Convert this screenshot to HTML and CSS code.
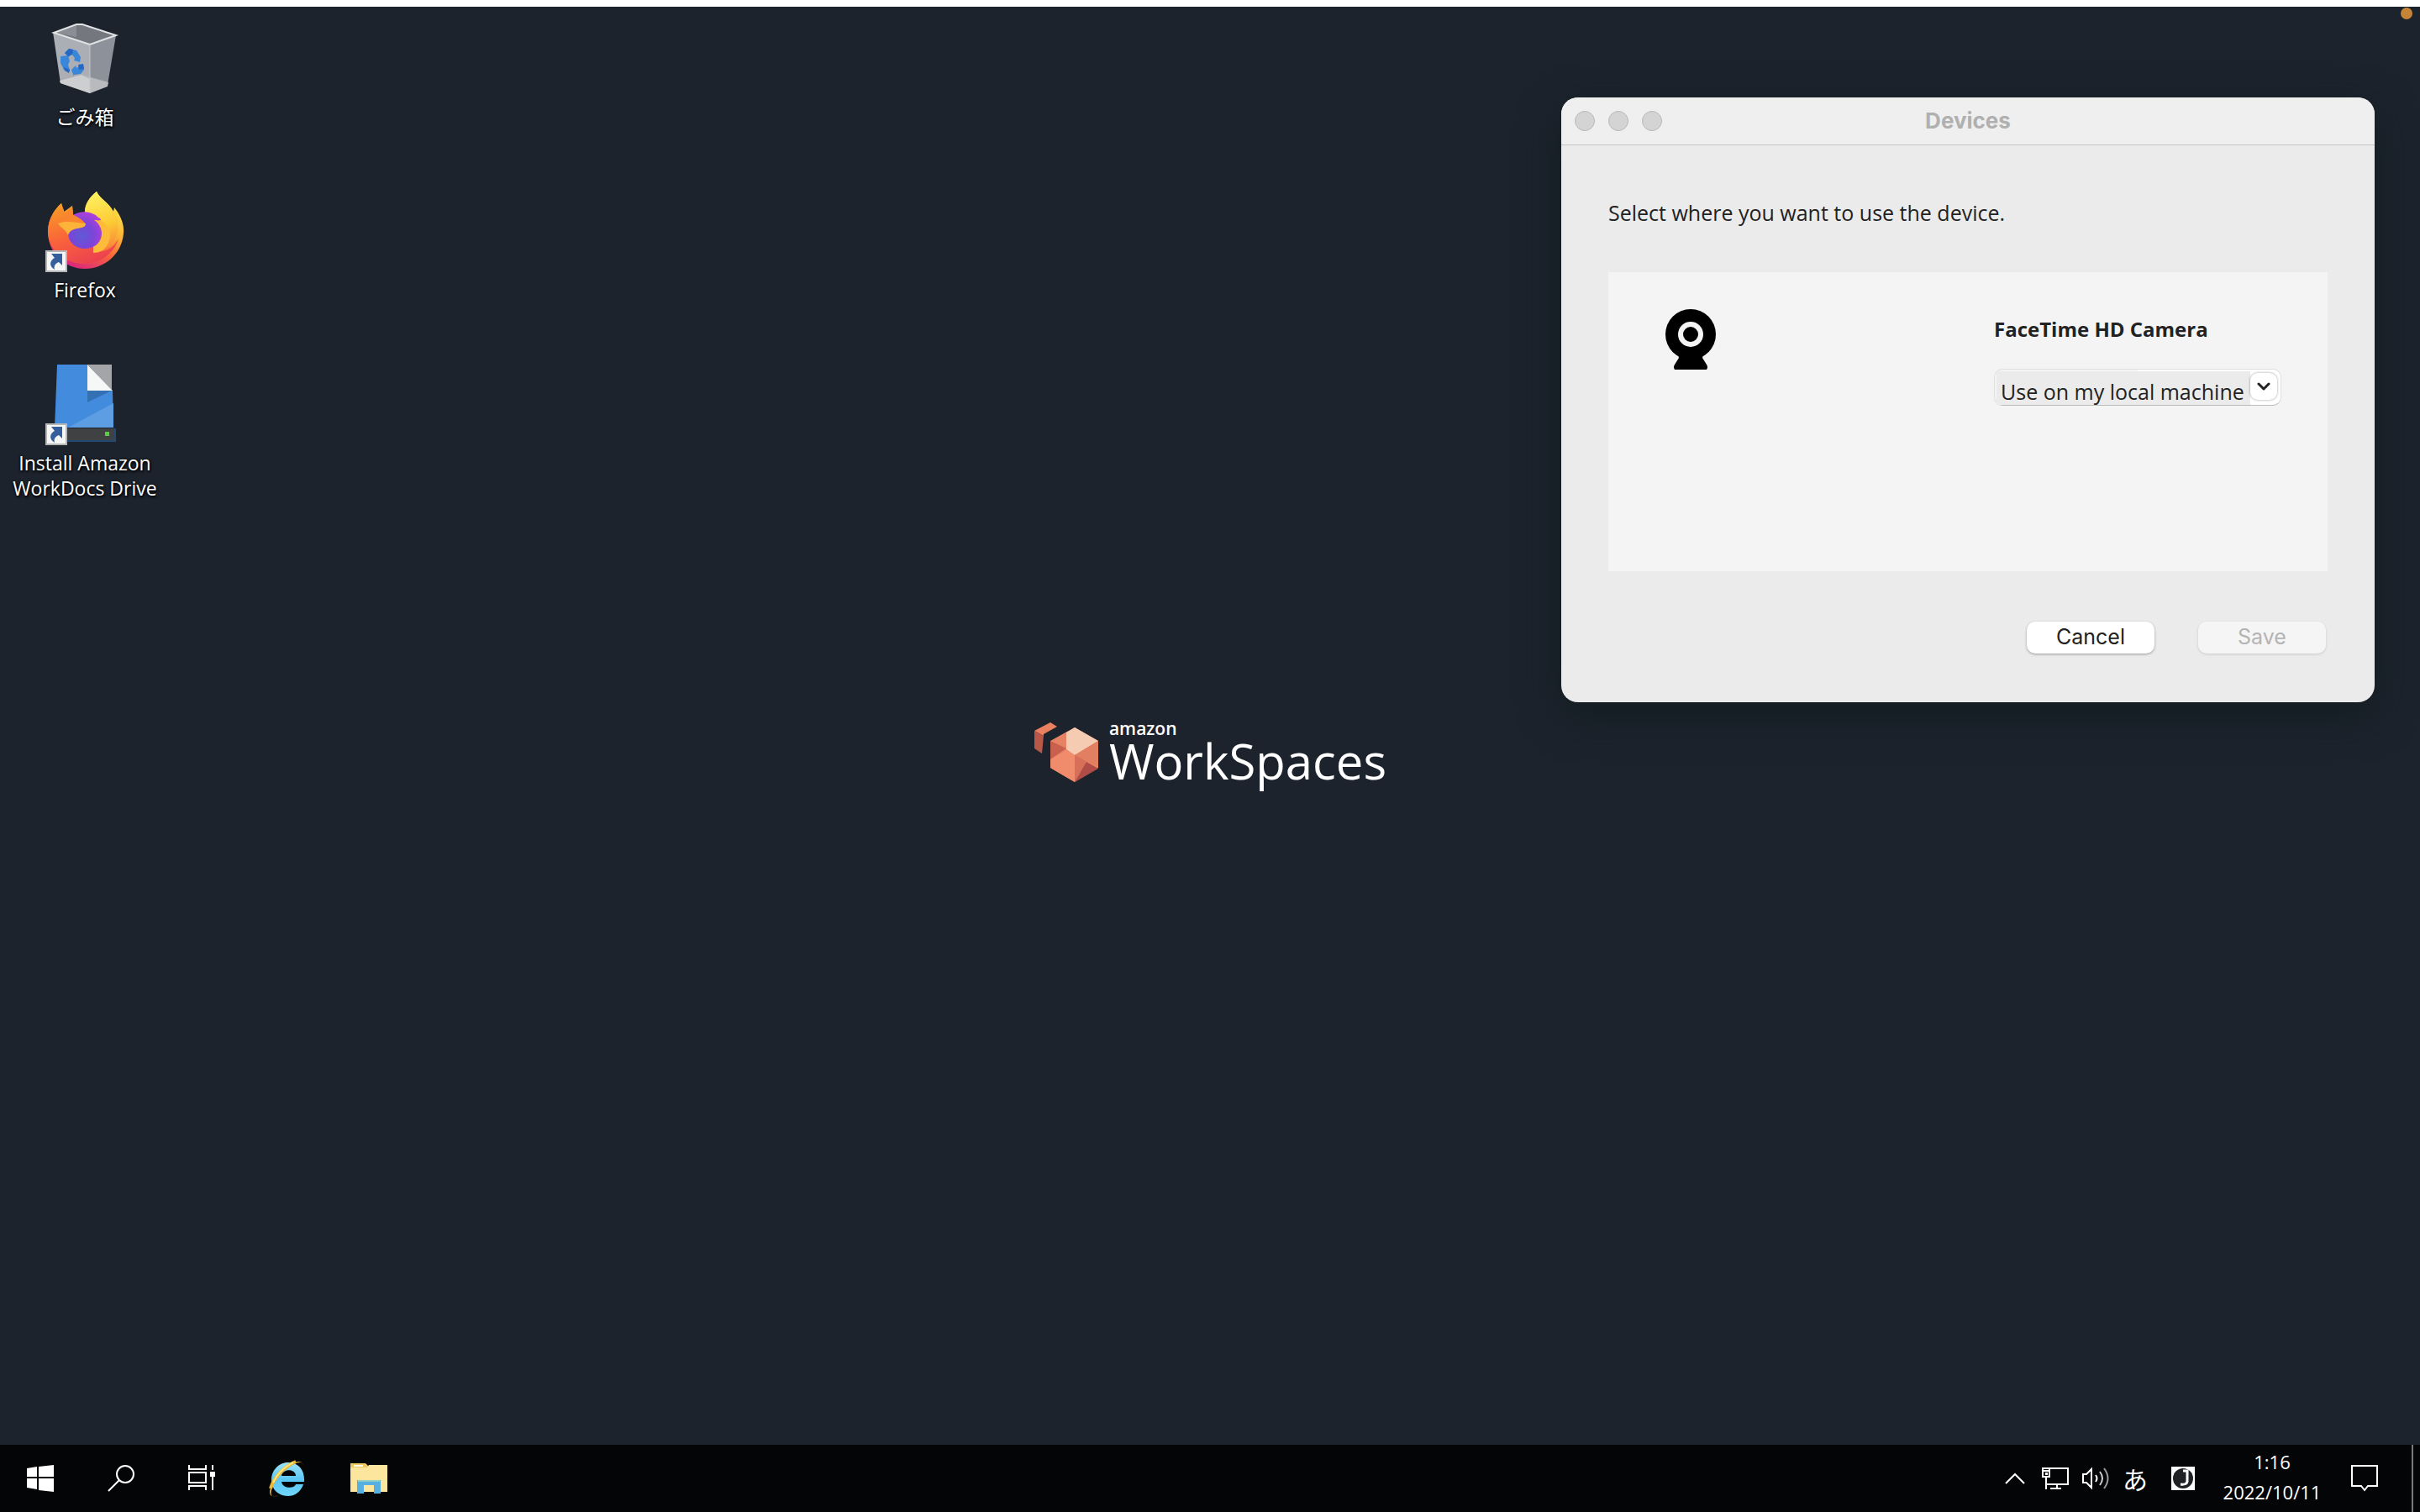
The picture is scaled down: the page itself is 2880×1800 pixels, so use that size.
FILE: index.html
```
<!DOCTYPE html>
<html lang="ja">
<head>
    <meta charset="UTF-8">
    <meta name="viewport" content="width=device-width, initial-scale=1.0">
    <title>Amazon WorkSpaces</title>
    <link rel="stylesheet" href="styles.css">
</head>
<body>
    <div class="screen">
        <main class="desktop">
            <span class="recording-dot"></span>

            <nav class="shortcuts">
                <a class="shortcut" href="#trash">
                    <svg class="shortcut-icon" width="96" height="96" viewBox="0 -2 96 96">
                        <path fill="#74777d" d="M11 19 38 9h8l39 13-31 11z"/>
                        <path fill="#8b8e94" d="M14 19 38 10v14z"/>
                        <path fill="#abaeb4" d="M10 18 54 33v58l-35-12z"/>
                        <path fill="#8d9199" d="M54 33 85 22l-10 59-21 10z"/>
                        <path fill="#cdced0" d="m18 76 26-7 10 5v17l-35-12z"/>
                        <path fill="#b8babe" d="m44 69 32 9-1 5-21 8V74z"/>
                        <path fill="none" stroke="#e1e2e4" stroke-width="2" d="M11 19 38 9h7l40 13-31 11z"/>
                        <path fill="none" stroke="#c4c6ca" d="M54 33v57"/>
                        <g fill="#3a86d8">
                            <path d="m24 43 5-5 9 2 5 8-1 6-7-2 1-3-4-5-3 4z"/>
                            <path d="m19 47 9-1 2 7-2 4 2 6-1 3-6-3-4-8z"/>
                            <path d="m32 63 5-5 1 3 8-5 1 7-4 5-8 1v2z"/>
                        </g>
                        <path fill="#2467c4" d="m24 43 5-5 5 1-1 6-5 2zM23 60l7 3-1 4-5-3zM40 57l6-1 1 6-6 1z"/>
                    </svg>
                    <span>ごみ箱</span>
                </a>
                <a class="shortcut" href="#firefox">
                    <svg class="shortcut-icon" width="96" height="96" viewBox="0 0 96 96">
                        <defs>
                            <linearGradient id="fox" x1=".8" y1=".1" x2=".35" y2="1">
                                <stop offset="0" stop-color="#fde94f"/>
                                <stop offset=".38" stop-color="#fbb034"/>
                                <stop offset=".65" stop-color="#f8633b"/>
                                <stop offset="1" stop-color="#d9257f"/>
                            </linearGradient>
                            <linearGradient id="foxBody" x1=".2" y1="0" x2=".6" y2="1">
                                <stop offset="0" stop-color="#f99b25"/>
                                <stop offset=".5" stop-color="#f9653a"/>
                                <stop offset="1" stop-color="#ec4051"/>
                            </linearGradient>
                            <linearGradient id="foxTail" x1=".3" y1="0" x2=".5" y2="1">
                                <stop offset="0" stop-color="#fff260"/>
                                <stop offset=".6" stop-color="#fcc934"/>
                                <stop offset="1" stop-color="#f9853b"/>
                            </linearGradient>
                            <radialGradient id="globe" cx=".4" cy=".65" r=".7">
                                <stop offset="0" stop-color="#5f5ad5"/>
                                <stop offset=".5" stop-color="#7a45d8"/>
                                <stop offset="1" stop-color="#b340dc"/>
                            </radialGradient>
                        </defs>
                        <path fill="url(#fox)" d="M48 30c-1-10 5-19 14-26 3 8 15 14 20 24l1-5c9 11 12 22 11 31-2 24-22 42-46 42S4 77 4 52c0-12 5-24 16-34l2 11 11-8 1 11z"/>
                        <path fill="url(#foxTail)" d="M48 31c0-11 4-19 14-27 4 9 15 13 20 24l2-3c5 12 5 32-5 43-5 5-12 8-18 8 10-10 8-32-6-39z"/>
                        <path fill="url(#foxBody)" d="M34 32 33 21l-9 8-4-11C10 27 4 39 4 51c0 22 18 38 42 39 18 0 36-10 42-30-6 12-17 17-26 15 9-8 9-22 5-31z"/>
                        <path fill="#fcbc3a" d="M58 34c17 5 24 20 17 33-4 7-10 10-17 10z"/>
                        <path fill="url(#globe)" d="M34 32c9-6 23-5 30 3 2 1 3 1 3 3-3 1-6 0-8 0 6 4 9 10 9 16 0 11-9 18-20 18S29 65 28 55c3-7 10-8 15-12-2-6-6-9-9-11z"/>
                        <path fill="#f9852f" d="M33 31c8 4 14 8 16 12-10-1-22-3-33 0z"/>
                        <path fill="#fcb339" d="M16 42c10-4 21-1 33 0 0 5-5 5-10 6-6 1-9 3-11 8-2-6-8-8-12-14z"/>
                    </svg>
                    <svg class="shortcut-arrow" width="26" height="26" viewBox="0 0 26 26">
                        <path fill="#f6f6f6" stroke="#b5b6b8" stroke-width="2" d="M1 1h24v24H1z"/>
                        <path fill="#345f9c" d="M7 4h13v14l-4-4c-5 2-6 5-5 9-7-4-6-11 0-14z"/>
                    </svg>
                    <span>Firefox</span>
                </a>
                <a class="shortcut" href="#workdocs">
                    <svg class="shortcut-icon" width="96" height="96" viewBox="0 0 96 96">
                        <path fill="#234a73" d="M13 80h72v16H13z"/>
                        <path fill="#438bdd" d="M15 4h36v31h30l1 44H12z"/>
                        <path fill="#5d9ee3" d="m28 79 54-29v29z"/>
                        <path fill="#3471b4" d="M51 35h29L51 49z"/>
                        <path fill="#a3a5a8" d="M51 4h29v30z"/>
                        <path fill="#f6f7f7" d="m51 4 30 31H51z"/>
                        <path fill="#404142" d="M13 80h70v14H13z"/>
                        <path fill="#53cf40" d="M72 84h5v5h-5z"/>
                    </svg>
                    <svg class="shortcut-arrow" width="26" height="26" viewBox="0 0 26 26">
                        <path fill="#f6f6f6" stroke="#b5b6b8" stroke-width="2" d="M1 1h24v24H1z"/>
                        <path fill="#345f9c" d="M7 4h13v14l-4-4c-5 2-6 5-5 9-7-4-6-11 0-14z"/>
                    </svg>
                    <span>Install Amazon WorkDocs Drive</span>
                </a>
            </nav>

            <div class="wallpaper">
                <svg width="80" height="72" viewBox="0 0 80 72">
                    <path fill="#e9805f" d="M1 10 20 0l8 5-16 9v2z"/>
                    <path fill="#b95748" d="m1 10 11 6-2 21-9-6z"/>
                    <path fill="#e58364" d="m49 6-29 16v32l29 17 28-17V22z"/>
                    <path fill="#c8604d" d="m20 22 19 9-19 13z"/>
                    <path fill="#f5cbb2" d="m49 6 28 16-28 17-10-7V12z"/>
                    <path fill="#ee8669" d="m49 39 28-17v25z"/>
                    <path fill="#f08b6c" d="m20 44 19-11 10 6v32L20 54z"/>
                    <path fill="#af4c47" d="m49 39 28 16-28 16z"/>
                    <path fill="#d87059" d="M49 39v32l14-24z"/>
                    <path fill="#e27f63" d="m49 39 28-17v30z"/>
                </svg>
                <div class="wallpaper-text">
                    <span class="brand">amazon</span>
                    <span class="product">WorkSpaces</span>
                </div>
            </div>

            <section class="window" aria-labelledby="windowTitle">
                <header class="titlebar">
                    <div class="lights">
                        <button class="light" aria-label="Close"></button>
                        <button class="light" aria-label="Minimize"></button>
                        <button class="light" aria-label="Zoom"></button>
                    </div>
                    <h1 id="windowTitle">Devices</h1>
                </header>
                <form class="window-body">
                    <p>Select where you want to use the device.</p>
                    <div class="device">
                        <svg width="60" height="72" viewBox="0 0 60 72">
                            <ellipse cx="30" cy="30" rx="30" ry="30"/>
                            <path d="M15 54h30l-1 4 5 8q2 3 0 6H11q-2-3 0-6l5-8z"/>
                            <circle cx="30" cy="30" r="12" fill="none" stroke="#f4f4f4" stroke-width="6"/>
                        </svg>
                        <div class="device-options">
                            <label for="location">FaceTime HD Camera</label>
                            <div class="combo">
                                <select id="location" name="location">
                                    <option selected>Use on my local machine</option>
                                    <option>Use on WorkSpaces</option>
                                </select>
                                <span class="combo-arrow">
                                    <svg width="16" height="12" viewBox="0 0 16 12"><path fill="none" stroke="#222" stroke-width="3" stroke-linecap="round" stroke-linejoin="round" d="m2 3 6 6 6-6"/></svg>
                                </span>
                            </div>
                        </div>
                    </div>
                    <div class="actions">
                        <button type="button">Cancel</button>
                        <button type="submit" disabled>Save</button>
                    </div>
                </form>
            </section>
        </main>

        <footer class="taskbar">
            <div class="apps">
                <button aria-label="Start">
                    <svg width="32" height="32" viewBox="0 0 32 32"><path fill="#fff" d="M0 4 12 2v12H0zM14 2l18-2v14H14zM0 16h12v13L0 27zM14 16h18v16l-18-2z"/></svg>
                </button>
                <button aria-label="Search">
                    <svg width="32" height="32" viewBox="0 0 32 32"><g fill="none" stroke="#fff" stroke-width="2"><circle cx="21" cy="11" r="10"/><path d="M14 18 1 31"/></g></svg>
                </button>
                <button aria-label="Task view">
                    <svg width="32" height="32" viewBox="0 0 32 32"><path fill="none" stroke="#fff" stroke-width="2" d="M1 0v5h20V0M1 9h20v12H1zM1 30v-5h20v5M29 0v6M29 14v16"/><path fill="#fff" d="M26 8h6v6h-6z"/></svg>
                </button>
                <button aria-label="Internet Explorer">
                    <svg width="46" height="46" viewBox="0 0 46 46">
                        <defs>
                            <linearGradient id="ie" x1="0" y1="0" x2="0" y2="1"><stop offset="0" stop-color="#9be4fa"/><stop offset=".5" stop-color="#5bc7f4"/><stop offset="1" stop-color="#70d6fa"/></linearGradient>
                        </defs>
                        <path fill="url(#ie)" fill-rule="evenodd" d="M25 4c12 0 20 9 19 23H17c1 8 15 9 17 3h9c-3 9-10 14-18 14C13 44 5 36 5 25S13 4 25 4zM17 20h17c0-9-16-9-17 0z"/>
                        <path fill="#e6b32b" d="M42 10c2-9-6-9-16-2C14 16 3 31 3 40c1 6 6 5 10 3-9 5-11-2-5-13C15 17 30 5 38 4c4-1 5 2 4 6z"/>
                        <path fill="none" stroke="#e9b93a" stroke-width="4" d="M4 35C8 21 21 8 34 3"/>
                        <path fill="none" stroke="#fbe680" stroke-width="2" d="M7 28C12 17 21 9 31 4"/>
                    </svg>
                </button>
                <button aria-label="File Explorer">
                    <svg width="44" height="36" viewBox="0 0 44 36">
                        <path fill="#f0ca60" d="M0 0h18l3 3v4H0z"/>
                        <path fill="#fce59c" d="M0 5h20l2-3h22v32H0z"/>
                        <path fill="#fffdf0" d="M4 2h11v2H4z"/>
                        <path fill="#58b0e2" d="M8 20h28v16h-8V26H16v10H8z"/>
                        <path fill="#fce59c" d="M16 28h12v6H16z"/>
                        <path fill="#8fd0c2" d="M9 20h26v2H9z"/>
                    </svg>
                </button>
            </div>
            <div class="tray">
                <button aria-label="Show hidden icons">
                    <svg width="24" height="16" viewBox="0 0 24 16"><path fill="none" stroke="#fff" stroke-width="2" d="M1 14 12 3l11 11"/></svg>
                </button>
                <button aria-label="Network">
                    <svg width="32" height="28" viewBox="0 0 32 28"><path fill="none" stroke="#fff" stroke-width="2" d="M10 2h21v19H5M1 2h8v10H1zM5 12v15M18 21v5M10 26h13M2 5h6"/><path fill="#fff" d="M4 7h3v3H4z"/></svg>
                </button>
                <button aria-label="Volume">
                    <svg width="32" height="28" viewBox="0 0 32 28"><g fill="none" stroke="#fff" stroke-width="2"><path d="M1 9h4l6-6v22l-6-6H1z"/><path d="M16 10q3 4 0 8"/><path d="M21 6q6 8 0 16" opacity=".8"/><path d="M26 2q9 12 0 24" opacity=".6"/></g></svg>
                </button>
                <button class="ime">あ</button>
                <button class="ime-mode" aria-label="Japanese">
                    <svg width="28" height="28" viewBox="0 0 28 28"><path fill="#fff" d="M0 0h28v28H0z"/><circle cx="14" cy="14" r="12" fill="#202124"/><path fill="none" stroke="#fff" stroke-width="3" d="M14 5h5v12q0 5-8 4"/></svg>
                </button>
                <button class="clock">
                    <time>1:16</time>
                    <time datetime="2022-10-11">2022/10/11</time>
                </button>
                <button class="notices" aria-label="Notifications">
                    <svg width="32" height="32" viewBox="0 0 32 32"><path fill="none" stroke="#fff" stroke-width="2" d="M1 1h30v24H20l-4 5-4-5H1z"/></svg>
                </button>
                <button class="show-desktop" aria-label="Show desktop"></button>
            </div>
        </footer>
    </div>
</body>
</html>
```
FILE: styles.css
```
body {
    margin: 0;
    font-family: "Open Sans", "Noto Sans CJK JP", sans-serif;
    font-size: 25px;
    background-color: #1c232d;
    color: #fff;
}
button {
    margin: 0;
    padding: 0;
    border: none;
    background: none;
    color: inherit;
    font: inherit;
}
svg {
    display: block;
}
.screen {
    display: flex;
    flex-direction: column;
    min-height: 100vh;
    box-sizing: border-box;
    border-top: 8px solid #fff;
}

/* desktop */
.desktop {
    position: relative;
    flex: 1;
    display: flex;
    padding-top: 64px;
}
.recording-dot {
    position: absolute;
    top: 1px;
    right: 9px;
    width: 14px;
    height: 14px;
    border-radius: 50%;
    background-color: #c68439;
}
.shortcuts {
    position: absolute;
    top: 10px;
    left: 0;
    display: flex;
    flex-direction: column;
    gap: 40px;
}
.shortcut {
    position: relative;
    display: flex;
    flex-direction: column;
    align-items: center;
    gap: 10px;
    width: 202px;
    min-height: 166px;
    color: #fff;
    font-size: 23px;
    line-height: 30px;
    text-align: center;
    text-decoration: none;
    text-shadow: 1px 2px 3px #000, 0 0 3px #000;
}
.shortcut-arrow {
    position: absolute;
    top: 74px;
    left: 54px;
}
.wallpaper {
    display: flex;
    align-items: center;
    gap: 10px;
    margin: auto;
}
.wallpaper-text {
    display: flex;
    flex-direction: column;
}
.brand {
    font-size: 21px;
    line-height: 20px;
    font-weight: 600;
}
.product {
    font-size: 58px;
    line-height: 58px;
    font-weight: 500;
}

/* devices window */
.window {
    position: absolute;
    top: 108px;
    right: 54px;
    width: min(968px, 90%);
    border-radius: 20px;
    overflow: hidden;
    background-color: #ebebeb;
    color: #222;
    box-shadow: 0 16px 50px rgba(16, 28, 30, 0.8);
}
.titlebar {
    display: grid;
    grid-template-columns: 1fr auto 1fr;
    align-items: center;
    padding: 0 16px;
    height: 56px;
    border-bottom: 1px solid #c6c6c6;
    background-color: #efefef;
}
.titlebar h1 {
    margin: 0;
    color: #b0b0b0;
    font-family: Inter, sans-serif;
    font-size: 26px;
    line-height: 32px;
}
.lights {
    display: flex;
    gap: 16px;
}
.light {
    width: 24px;
    height: 24px;
    border: 1px solid #b8b8b8;
    border-radius: 50%;
    background-color: #d4d4d4;
}
.window-body {
    padding: 64px 56px 58px;
}
.window-body p {
    margin: 0 0 55px;
    line-height: 32px;
}
.device {
    display: flex;
    justify-content: space-between;
    min-height: 356px;
    box-sizing: border-box;
    padding: 44px 55px 44px 68px;
    background-color: #f4f4f4;
}
.device-options {
    display: flex;
    flex-direction: column;
    gap: 31px;
    width: 342px;
    padding-top: 8px;
}
.device-options label {
    font-size: 24px;
    line-height: 32px;
    font-weight: 700;
}
.combo {
    display: flex;
    border: 1px solid #dedede;
    border-bottom-color: #bbb;
    border-radius: 10px;
    padding: 2px 4px 0 2px;
    background: linear-gradient(to right, #f4f4f4 50%, #fff 50%);
}
.combo select {
    appearance: none;
    flex: 1;
    height: 40px;
    margin: 0;
    padding: 8px 5px 0;
    border: none;
    border-radius: 0;
    background-color: #ebebeb;
    color: #222;
    font: inherit;
    line-height: 32px;
}
.combo-arrow {
    display: flex;
    align-items: center;
    justify-content: center;
    width: 32px;
    height: 32px;
    margin-top: 2px;
    border-radius: 9px;
    background-color: #fff;
    box-shadow: 0 0 3px rgba(0, 0, 0, 0.4);
    pointer-events: none;
}
.actions {
    display: flex;
    justify-content: flex-end;
    gap: 52px;
    margin-top: 60px;
    padding-right: 2px;
}
.actions button {
    width: 152px;
    height: 38px;
    padding-bottom: 2px;
    border-radius: 10px;
    background-color: #fff;
    box-shadow: 0 1px 3px rgba(0, 0, 0, 0.35);
    font-family: Inter, sans-serif;
    font-size: 25px;
    line-height: 36px;
}
.actions button:disabled {
    background-color: #f5f5f5;
    box-shadow: 0 1px 3px rgba(0, 0, 0, 0.15);
    color: #b4b4b4;
}

/* taskbar */
.taskbar {
    display: flex;
    justify-content: space-between;
    height: 80px;
    background-color: #040506;
}
.apps, .tray {
    display: flex;
    align-items: center;
}
.apps button {
    display: flex;
    justify-content: center;
    width: 96px;
}
.apps button:nth-child(n+4) {
    width: 98px;
}
.apps button:nth-child(4) {
    margin-left: 4px;
}
.tray {
    gap: 16px;
}
.tray > button:first-child {
    margin-right: 4px;
}
.ime {
    font-family: "Noto Sans CJK JP", sans-serif;
    font-size: 30px;
    line-height: 32px;
}
.ime-mode {
    margin-left: 12px;
}
.clock {
    display: flex;
    flex-direction: column;
    width: 124px;
    margin-left: 14px;
    padding-bottom: 4px;
    font-size: 22px;
    line-height: 36px;
}
.notices {
    margin-left: 16px;
}
.show-desktop {
    align-self: stretch;
    width: 10px;
    margin-left: 24px;
    border-left: 2px solid #77797b;
}
```
